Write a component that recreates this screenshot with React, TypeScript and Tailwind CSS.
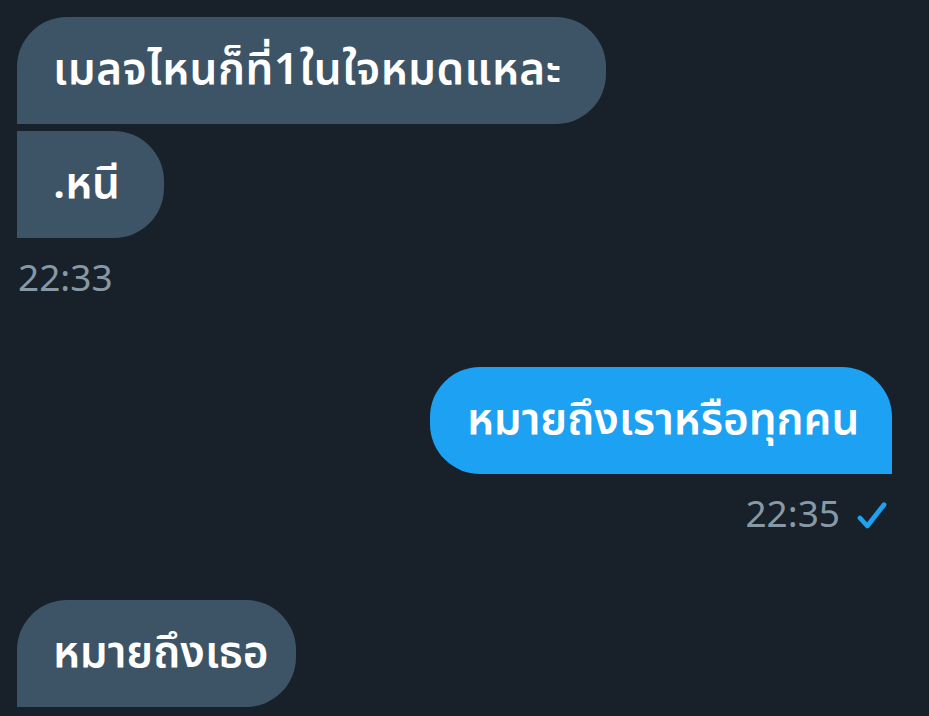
const Check = () => (
  <svg width="32" height="32" viewBox="0 0 24 24" fill="none" stroke="#1da1f2" strokeWidth="3.6" strokeLinecap="round" strokeLinejoin="round">
    <path d="M3 13.5 L8.5 19.5 L21 3.5" />
  </svg>
);

const thai = { fontFamily: '"Noto Sans Thai", "Noto Sans", "Liberation Sans", sans-serif' };

export default function App() {
  return (
    <div className="min-h-[716px] w-full overflow-hidden bg-[#18202a] pl-[17px] pr-[37px] pt-[17px]" style={thai}>
      <div className="flex flex-col items-start gap-[7px]">
        <div className="flex h-[107px] w-[589px] items-center whitespace-nowrap rounded-[50px] rounded-bl-none bg-[#3d5466] px-[36px] text-[44px] tracking-[0.5px] font-semibold text-white">
          เมลจไหนก็ที่1ในใจหมดแหละ
        </div>
        <div className="flex h-[107px] w-[147px] items-center rounded-r-[50px] bg-[#3d5466] px-[36px] text-[44px] font-semibold text-white">
          .หนี
        </div>
      </div>
      <div className="mt-[22px] pl-[1px] text-[37px] leading-[40px] text-[#8899a6]">22:33</div>

      <div className="mt-[67px] flex flex-col items-end">
        <div className="flex h-[107px] w-[462px] items-center whitespace-nowrap rounded-[50px] rounded-br-none bg-[#1da1f2] px-[37px] text-[44px] font-semibold text-white">
          หมายถึงเราหรือทุกคน
        </div>
        <div className="mt-[22px] flex items-center gap-[16px] text-[37px] leading-[40px] text-[#8899a6]">
          <span>22:35</span>
          <span className="pr-[4px]"><Check /></span>
        </div>
      </div>

      <div className="mt-[64px] flex flex-col items-start">
        <div className="flex h-[107px] w-[279px] items-center whitespace-nowrap rounded-[50px] rounded-bl-none bg-[#3d5466] px-[36px] text-[44px] font-semibold text-white">
          หมายถึงเธอ
        </div>
      </div>
    </div>
  );
}
